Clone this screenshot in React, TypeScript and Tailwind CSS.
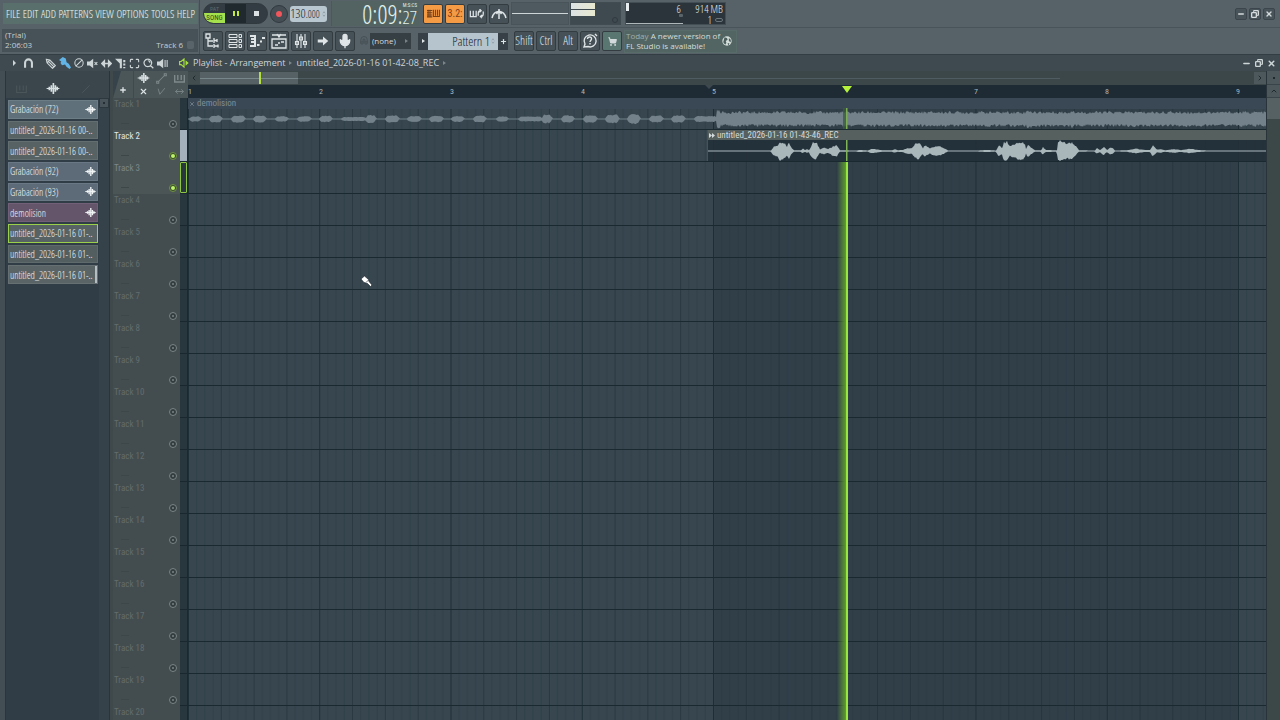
import type { ReactNode } from "react";
import {
  ArrowRight,
  Ban,
  ChevronRight,
  ChevronUp,
  Copy,
  Magnet,
  Maximize,
  Mic,
  Minus,
  Plus,
  ShoppingCart,
  X,
} from "lucide-react";

const NARROW = "font-['Open_Sans_Condensed_Light','Roboto_Condensed','Liberation_Sans',sans-serif]";
const LABEL = "font-['Roboto_Condensed','Roboto','Liberation_Sans',sans-serif]";
const WIDE = "font-['Open_Sans','Noto_Sans',sans-serif]";

const BAR = 131.25;
const TRACKS = Array.from({ length: 20 }, (_, i) => i + 1);

const MENU = ["FILE", "EDIT", "ADD", "PATTERNS", "VIEW", "OPTIONS", "TOOLS", "HELP"];

type Clip = { name: string; tone: string; wave?: boolean };

const PICKER: Clip[] = [
  { name: "Grabación (72)", tone: "bg-[#60707a] border-[#6d7d86]", wave: true },
  { name: "untitled_2026-01-16 00-..", tone: "bg-[#566264] border-[#626e70]" },
  { name: "untitled_2026-01-16 00-..", tone: "bg-[#566264] border-[#626e70]" },
  { name: "Grabación (92)", tone: "bg-[#5d6a78] border-[#6a7785]", wave: true },
  { name: "Grabación (93)", tone: "bg-[#5d6a78] border-[#6a7785]", wave: true },
  { name: "demolision", tone: "bg-[#64556a] border-[#725f78]", wave: true },
  { name: "untitled_2026-01-16 01-..", tone: "bg-[#566264] border-[#9bd04a]" },
  { name: "untitled_2026-01-16 01-..", tone: "bg-[#525e60] border-[#5e6a6c]" },
  { name: "untitled_2026-01-16 01-..", tone: "bg-[#5a6466] border-[#667072]" },
];

function noise(i: number) {
  const v = Math.sin(i * 12.9898) * 43758.5453;
  return v - Math.floor(v);
}

function envelope(points: [number, number][], x: number) {
  for (let i = 1; i < points.length; i++) {
    const [x1, a1] = points[i];
    const [x0, a0] = points[i - 1];
    if (x <= x1) return a0 + ((a1 - a0) * (x - x0)) / Math.max(1, x1 - x0);
  }
  return 0;
}

function shape(from: number, to: number, mid: number, amp: (x: number) => number) {
  const up: string[] = [];
  const down: string[] = [];
  for (let x = from; x <= to; x++) {
    const a = amp(x);
    up.push(`${x},${(mid - a).toFixed(1)}`);
    down.unshift(`${x},${(mid + amp(x + 0.37)).toFixed(1)}`);
  }
  return `M${up.join("L")}L${down.join("L")}Z`;
}

const PULSES: [number, number, number][] = [
  [2, 13, 2], [22, 34, 3], [44, 57, 3], [66, 78, 3], [88, 100, 2.2], [110, 123, 2.2],
  [132, 144, 2.6], [154, 178, 1.4], [178, 188, 3.4], [198, 211, 3], [220, 233, 2.4],
  [242, 255, 2.6], [264, 276, 2.4], [286, 298, 2.8], [309, 320, 2], [331, 354, 1.9],
  [354, 364, 3.8], [374, 386, 3.2], [396, 409, 3], [418, 431, 3.8], [440, 452, 4.2],
  [462, 475, 2.8], [484, 497, 3], [507, 529, 2.4],
];

function songAmp(x: number) {
  const i = Math.floor(x);
  if (i >= 529) {
    const accent = i < 533 || (i > 838 && i < 844) || (i > 882 && i < 887) ? 1.6 : 0;
    return 5 + noise(x) * 3 + accent;
  }
  for (const [a, b, h] of PULSES) {
    if (x >= a && x <= b) {
      const edge = Math.min(1, (Math.min(x - a, b - x) + 1) / 3);
      return 0.6 + h * edge * (0.75 + noise(x) * 0.3);
    }
  }
  return 0.6;
}

const VOICE: [number, number][] = [
  [0, 0.6], [63, 0.6], [66, 5], [70, 6], [72, 10], [77, 8], [79, 5], [81, 9], [84, 3], [86, 0.7],
  [93, 0.7], [95, 2.5], [97, 0.8], [99, 2], [101, 0.8], [105, 9], [109, 8], [112, 2], [116, 3.5],
  [120, 2], [125, 5], [129, 6], [132, 0.7], [149, 0.6], [151, 1], [160, 0.6], [164, 2.5],
  [169, 1.5], [175, 0.7], [184, 0.7], [187, 1.8], [190, 0.8], [195, 1], [199, 3], [204, 3],
  [207, 7], [211, 9], [215, 3], [217, 6], [222, 3], [226, 4.5], [232, 5], [236, 3], [240, 0.6],
  [270, 0.6], [279, 1], [288, 0.6], [291, 6], [294, 3], [296, 9], [299, 10], [302, 5], [306, 7],
  [312, 9], [317, 8], [318, 2], [320, 6], [327, 0.8], [333, 0.7], [335, 4], [338, 1], [349, 0.7],
  [350, 9], [352, 11], [358, 8], [364, 9], [368, 5], [371, 0.7], [387, 0.6], [389, 3], [392, 1],
  [396, 4.5], [399, 1], [402, 3.5], [405, 3], [407, 0.6], [419, 0.7], [428, 2.5], [437, 1],
  [442, 1], [445, 5.5], [449, 1.5], [453, 1.8], [457, 0.7], [467, 2], [473, 0.8], [482, 2.4],
  [490, 1], [498, 0.6], [560, 0.6],
];

const SONG_PATH = shape(0, 1600, 21, songAmp);
const VOICE_PATH = shape(0, 1100, 11, (x) => {
  const a = x > 556 ? 0.6 : envelope(VOICE, x);
  return a > 1.5 ? a * (0.8 + noise(x) * 0.25) : a;
});

function WaveIcon({ className = "" }: { className?: string }) {
  return (
    <svg viewBox="0 0 14 12" className={className} fill="none" stroke="currentColor" strokeWidth="1.8" aria-hidden>
      <path d="M0 6h14" strokeWidth="1.2" />
      <path d="M3 4.200v3.600M5.200 2.500v7M7.400 0v12M9.600 2.500v7M11.600 4.200v3.600" />
    </svg>
  );
}

function Stroke({ d, className = "size-4", width = 1.5 }: { d: string; className?: string; width?: number }) {
  return (
    <svg viewBox="0 0 16 16" className={className} fill="none" stroke="currentColor" strokeWidth={width} aria-hidden>
      <path d={d} />
    </svg>
  );
}

function Tool({ label, children, tone = "" }: { label: string; children: ReactNode; tone?: string }) {
  return (
    <button
      aria-label={label}
      className={`flex size-5 shrink-0 items-center justify-center rounded-[2px] border border-[#323c41] ${tone || "bg-[#465157] text-[#dfe5e7]"}`}
    >
      {children}
    </button>
  );
}

function Transport() {
  return (
    <div className="flex h-[27px] items-center">
      <div className="ml-[3px] flex h-[21px] w-[65px] items-stretch overflow-hidden rounded-full border border-[#30393e] bg-[#333c42]">
        <button className={`flex w-[21px] flex-col text-center text-[6px] leading-[9px] ${LABEL}`}>
          <span className="text-[#5d676b]">PAT</span>
          <span className="bg-[#a5e14c] text-[7px] leading-[10px] text-[#33451d]">SONG</span>
        </button>
        <button aria-label="Pause" className="flex w-[21px] items-center justify-center gap-[2px] bg-[#20292e]">
          <span className="h-[5px] w-[2px] bg-[#c4ea3c]" />
          <span className="h-[5px] w-[2px] bg-[#c4ea3c]" />
        </button>
        <button aria-label="Stop" className="flex w-5 items-center justify-center">
          <span className="size-[5px] bg-[#dbe0e2]" />
        </button>
      </div>
      <button aria-label="Record" className="ml-[2px] flex size-[18px] items-center justify-center rounded-full border border-[#30393e] bg-[#434d53]">
        <span className="size-[6px] rounded-full bg-[#f0565c]" />
      </button>
      <button aria-label="Tempo" className={`ml-[2px] flex h-4 w-[37px] items-center justify-center rounded-[3px] bg-[#b9c7d0] text-[#15232b] ${NARROW}`}>
        <span className="flex items-baseline">
          <span className="text-[13px] leading-4">130</span>
          <span className="text-[10px] leading-4">.000</span>
        </span>
        <Stroke d="M5 6l3-4 3 4M5 10l3 4 3-4" className="ml-px size-[6px] text-[#73828c]" />
      </button>
      <div className={`ml-1 flex h-[25px] w-[88px] items-center justify-end border-l border-[#4a5a5a] bg-[#526361] pr-[2px] text-[#e0f0ea] ${NARROW}`}>
        <span className="text-[25px] leading-6">0:09:</span>
        <span className="flex flex-col">
          <span className={`text-right text-[5px] leading-[6px] ${LABEL}`}>M:S:CS</span>
          <span className="text-[18px] leading-[18px]">27</span>
        </span>
      </div>
      <div className="ml-1 flex gap-[2px]">
        <Tool label="Typing keyboard" tone="bg-[#f59a45] text-[#74401a]">
          <svg viewBox="0 0 18 12" className="h-[9px] w-4" fill="none" stroke="currentColor" strokeWidth="1.4" aria-hidden>
            <path d="M1 2h7M1 5h7M1 8h7M2.500 1v9M5 1v9M9.500 1v9h8V1M12.200 1v8M14.900 1v8M1 10.500h7" />
          </svg>
        </Tool>
        <Tool label="Countdown" tone="bg-[#f59a45] text-[#74401a]">
          <span className={`text-[10px] leading-3 ${LABEL}`}>3.2:</span>
        </Tool>
        <Tool label="Loop record">
          <svg viewBox="0 0 18 12" className="h-[10px] w-4" fill="none" stroke="currentColor" strokeWidth="1.5" aria-hidden>
            <path d="M1 2v7h7V2M4.500 2v7M10.500 8V5c0-2 1-3 3-3M12 0l2 2-2 2M16.500 3v3c0 2-1 3-3 3M15 11l-2-2 2-2" />
          </svg>
        </Tool>
        <Tool label="Metronome">
          <Stroke d="M1 12C2 8 4 5.500 8 5.500S14 8 15 12M8 3v10M5.500 8 8 4.500 10.500 8" />
        </Tool>
      </div>
      <div className="ml-[2px] flex h-[23px] w-[58px] items-center border border-[#48535a] bg-[#4f5a60]">
        <div className="h-px w-full bg-[#cfd6d8]" />
      </div>
      <div className="ml-px h-[23px] w-[51px] border border-[#414c52] bg-[#3f4a50]">
        <div className="h-[6px] w-[24px] bg-gradient-to-r from-[#dde2e4] to-[#e9e9cf]" />
        <div className="mt-px h-[6px] w-[24px] bg-gradient-to-r from-[#dde2e4] to-[#e9e9cf]" />
        <div className="ml-auto mr-[2px] mt-px size-[6px] rounded-full border border-[#2f393f]" />
      </div>
      <div className={`ml-1 flex h-[23px] w-[101px] border border-[#434e54] bg-[#2a343a] text-[11px] leading-[11px] text-[#e4eaec] ${NARROW}`}>
        <div className="flex w-[57px] flex-col justify-between border-b border-[#aeb6b9]">
          <div className="flex justify-between pr-[2px]">
            <span className="h-2 w-[3px] bg-[#e8edef]" />
            <span>6</span>
          </div>
          <span className="mb-[6px] ml-auto size-1 rounded-[1px] bg-[#59656b]" />
        </div>
        <div className="flex flex-1 flex-col pr-[2px] text-right">
          <span>914 MB</span>
          <span className="flex items-center justify-end gap-[3px]">
            1<span className="h-1 w-2 rounded-full border border-[#6a767b]" />
          </span>
        </div>
      </div>
    </div>
  );
}

function Shortcuts() {
  return (
    <div className="flex h-[27px] items-center border-t border-[#48535a]">
      <div className="ml-[3px] flex gap-[2px]">
        <Tool label="Browser"><Stroke d="M1 1h4v4H1zM3 5v8h5M3 8h5M9 5v5M9 7.500h3M12 6v3M9 11v4M9 13h4M13 11.500v3" width={1.3} /></Tool>
        <Tool label="Channel rack"><Stroke d="M2 1.500h8v3H2zM2 6.500h8v3H2zM2 11.500h8v3H2zM12 1.500h2.500v3H12zM12 6.500h2.500v3H12zM12 11.500h2.500v3H12z" width={1} /></Tool>
        <Tool label="Piano roll"><Stroke d="M1 3h5v3H2M6 6v3H2M6 9v4H1M8 12h2.500M11 8.500h2M13 5h3" width={2} /></Tool>
        <Tool label="Playlist"><Stroke d="M1 6h14v9H1zM1 2h14M6 1l2 3 2-3M4 12h3M7 10h2M10 9h3" width={1.3} /></Tool>
        <Tool label="Mixer"><Stroke d="M4 1v14M8 1v14M12 1v14M2.500 8.500h3v3h-3zM10.500 8.500h3v3h-3zM6.500 4h3v3h-3z" width={1.1} /></Tool>
        <Tool label="Next">
          <svg viewBox="0 0 16 16" className="size-3" fill="currentColor" aria-hidden><path d="M1 6h7V2l7 6-7 6v-4H1z" /></svg>
        </Tool>
        <Tool label="Microphone"><Mic className="size-4" fill="currentColor" strokeWidth={2} /></Tool>
      </div>
      <Magnet className="ml-1 size-[10px] -rotate-45 text-[#454f54]" />
      <div className="ml-px flex h-4 w-[41px] items-center bg-[#353f44] pl-[2px] text-[#d3dadc]">
        <select aria-label="Snap" className={`min-w-0 flex-1 appearance-none bg-transparent text-[8px] leading-4 outline-none ${WIDE}`}>
          <option>(none)</option>
        </select>
        <span className="mr-[3px] border-y-[2px] border-l-[3px] border-y-transparent border-l-[#77828a]" />
      </div>
      <button aria-label="Pattern menu" className="ml-[7px] flex h-[17px] w-[10px] items-center justify-center bg-[#364046]">
        <span className="border-y-[2px] border-l-[3px] border-y-transparent border-l-[#dfe5e7]" />
      </button>
      <div className="flex h-[17px] w-[70px] items-center bg-[#b6c4ce] pr-[2px] text-[#15232b]">
        <select aria-label="Pattern" className={`min-w-0 flex-1 appearance-none bg-transparent text-right text-[13px] leading-4 outline-none [text-align-last:right] ${NARROW}`}>
          <option>Pattern 1</option>
        </select>
        <Stroke d="M5 6l3-4 3 4M5 10l3 4 3-4" className="size-[6px] text-[#7c8a94]" />
      </div>
      <button aria-label="Add pattern" className="flex h-[17px] w-[10px] items-center justify-center bg-[#364046] text-[#dfe5e7]">
        <Plus className="size-[7px]" strokeWidth={4} />
      </button>
      <div className={`ml-[6px] flex gap-[2px] text-[12px] ${NARROW}`}>
        <Tool label="Shift">Shift</Tool>
        <Tool label="Ctrl">Ctrl</Tool>
        <Tool label="Alt">Alt</Tool>
        <Tool label="Help">
          <Stroke d="M2 14l1-3A6 6 0 1 1 6 13.500zM5.500 6c0-3 4.500-2.500 4 0C9.500 7 8 7.500 8 9M8 10v1.500M13 1l2 2" width={1.4} />
        </Tool>
        <Tool label="Shop" tone="bg-[#5a7670] text-[#d3dadc]"><ShoppingCart className="size-[9px]" fill="currentColor" strokeWidth={3} /></Tool>
      </div>
      <div className={`ml-[2px] flex h-[23px] w-[113px] items-center justify-between border border-[#576b69] bg-[#536563] pl-px pr-1 text-[8px] leading-[10px] text-[#d3ddda] ${WIDE}`}>
        <p className="whitespace-nowrap">
          <span className="text-[#9fb0ac]">Today</span> A newer version of
          <br />
          FL Studio is available!
        </p>
        <svg viewBox="0 0 16 16" className="size-[10px] shrink-0" aria-hidden>
          <circle cx="8" cy="8" r="7.500" fill="currentColor" />
          <path d="M4 2l4 1 1 3-3 2 1 3-2 3-3-4zM11 3l3 3v4l-3-2zM9 11l3 1-2 3z" fill="#4c5f5d" />
        </svg>
      </div>
    </div>
  );
}

function TopBar() {
  return (
    <header className="flex h-[54px] shrink-0 items-start bg-[#566268]">
      <div className="flex h-[54px] w-[200px] shrink-0 flex-col border-r border-[#444f55]">
        <nav className={`ml-[3px] mt-[3px] flex h-[21px] w-[195px] items-center justify-between bg-[#596f6b] px-[3px] text-[11px] leading-3 text-[#f0f7f4] ${NARROW}`}>
          {MENU.map((m) => (
            <button key={m}>{m}</button>
          ))}
        </nav>
        <div className={`ml-[2px] mt-[5px] h-[23px] w-[196px] border border-[#465157] bg-[#475258] px-[2px] text-[8px] leading-[10px] text-[#c6ced0] ${WIDE}`}>
          <div>(Trial)</div>
          <div className="flex items-center justify-between">
            <span>2:06:03</span>
            <span className="flex items-center gap-[4px]">
              Track 6<span className="mr-px h-2 w-[7px] rounded-[2px] bg-[#59646a]" />
            </span>
          </div>
        </div>
      </div>
      <div className="flex flex-1 flex-col">
        <div className="flex items-center justify-between">
          <Transport />
          <div className="mr-[5px] flex gap-[2px] text-[#d4dadc]">
            {[Minus, Copy, X].map((Icon, i) => (
              <button key={i} aria-label={["Minimize", "Restore", "Close"][i]} className="flex size-3 items-center justify-center rounded-[2px] border border-[#3b454b] bg-[#48535a]">
                <Icon className={i === 1 ? "size-2 rotate-90" : "size-2"} strokeWidth={4} />
              </button>
            ))}
          </div>
        </div>
        <Shortcuts />
      </div>
    </header>
  );
}

function TitleBar() {
  return (
    <div className={`flex h-[17px] shrink-0 items-center border-t border-[#333d44] bg-[#3f4a50] text-[#cdd5d7] ${WIDE}`}>
      <div className="flex w-[175px] items-center pl-[13px]">
        <button aria-label="Menu" className="mr-[7px] border-y-[3px] border-l-[3px] border-y-transparent border-l-[#cdd5d7]" />
        <button aria-label="Snap to grid"><Stroke d="M3 14V7a5 5 0 0 1 10 0v7M1.500 12h3M11.500 12h3" className="size-[11px]" width={3} /></button>
        <div className="ml-[11px] flex w-[123px] items-center justify-between">
          <button aria-label="Draw"><Stroke d="M2 2l5 1 8 8-4 4-8-8zM5 5l8 8M7 3L3 7" className="size-[11px]" width={1.7} /></button>
          <button aria-label="Paint" className="text-[#62b4e6]">
            <svg viewBox="0 0 16 16" className="size-[12px]" fill="currentColor" aria-hidden><path d="M0 4l5-4 4 2 1 5 3 2 3 5-2 2-4-3-2-3-4 1-2-3 1-2z" /></svg>
          </button>
          <button aria-label="Delete"><Ban className="size-[10px] rotate-90" strokeWidth={2.5} /></button>
          <button aria-label="Mute"><svg viewBox="0 0 16 16" className="size-[11px]" fill="currentColor" aria-hidden><path d="M0 5h4l5-4v14l-5-4H0z" /><path d="M11 6l4 4M15 6l-4 4" stroke="currentColor" strokeWidth="1.6" /></svg></button>
          <button aria-label="Slip"><Stroke d="M1 8h14M5 4L1 8l4 4zM11 4l4 4-4 4z" className="size-[11px]" width={2} /></button>
          <button aria-label="Slice"><svg viewBox="0 0 16 16" className="size-[11px]" fill="currentColor" aria-hidden><path d="M0 1h10v14H7V8z" /><path d="M12 3h3v3h-3zM12 8h3v3h-3zM12 13h3v2h-3z" /></svg></button>
          <button aria-label="Select"><Maximize className="size-[11px]" strokeWidth={2.5} /></button>
          <button aria-label="Zoom"><Stroke d="M7 1.500a5.500 5.500 0 1 0 .1 0M11 11l4 4M7 4a3 3 0 0 1 3 3" className="size-[11px]" width={1.8} /></button>
          <button aria-label="Playback"><svg viewBox="0 0 16 16" className="size-[11px]" fill="currentColor" aria-hidden><path d="M0 5h4l5-4v14l-5-4H0zM11 3h1.500v10H11zM14 3h1.500v10H14z" /></svg></button>
        </div>
      </div>
      <button aria-label="Play source" className="ml-[4px] text-[#a8e23c]">
        <svg viewBox="0 0 16 16" className="size-[10px]" fill="none" stroke="currentColor" strokeWidth="1.8" aria-hidden>
          <path d="M1 5.500h2.500L8 1.500v13L3.500 10.500H1z" />
          <path d="M10.500 3.500 15.500 8l-5 4.500z" fill="currentColor" stroke="none" />
        </svg>
      </button>
      <div className="ml-[4px] flex items-center whitespace-nowrap text-[9px] leading-4">
        <span>Playlist - Arrangement</span>
        <span className="mx-[4px] border-y-[2px] border-l-[3px] border-y-transparent border-l-[#7b868b]" />
        <span>untitled_2026-01-16 01-42-08_REC</span>
        <span className="mx-[4px] border-y-[2px] border-l-[3px] border-y-transparent border-l-[#7b868b]" />
      </div>
      <div className="ml-auto mr-[4px] flex gap-[4px]">
        <button aria-label="Minimize window"><Minus className="size-[9px]" strokeWidth={4} /></button>
        <button aria-label="Restore window"><Copy className="size-2 rotate-90" strokeWidth={4} /></button>
        <button aria-label="Close window"><X className="size-[9px]" strokeWidth={4} /></button>
      </div>
    </div>
  );
}

function Picker() {
  return (
    <aside className="flex w-[104px] shrink-0 flex-col border-l border-[#2a353c] bg-[#313d46]">
      <div className="flex h-[27px] shrink-0 items-center bg-[#3b464c] pl-[10px] pt-2">
        <button aria-label="Patterns" className="text-[#4b565b]"><Stroke d="M1 3v10h14V3M5.500 3v7M10.500 3v7" className="h-3 w-[11px]" /></button>
        <button aria-label="Audio clips" className="ml-[19px] text-[#d8dfe1]"><WaveIcon className="h-[11px] w-[14px]" /></button>
        <button aria-label="Automation" className="ml-[21px] text-[#4b565b]"><Stroke d="M2 14L14 2" className="size-[10px]" /></button>
      </div>
      <div className="flex flex-1">
        <div className={`ml-[2px] mt-[2px] grid h-[184px] w-[90px] auto-rows-fr gap-[2px] text-[10px] text-[#f1f5f6] ${NARROW}`}>
          {PICKER.map((c, i) => (
            <button key={i} className={`flex items-center justify-between overflow-hidden whitespace-nowrap border pl-px text-left ${c.tone}`}>
              <span className="leading-3">{c.name}</span>
              {c.wave && <WaveIcon className="mr-px h-[9px] w-[11px] shrink-0" />}
              {i === 8 && <span className="h-full w-[2px] shrink-0 bg-[#b4bdc1]" />}
            </button>
          ))}
        </div>
        <div className="ml-px flex w-[10px] flex-col bg-[#36424a]">
          <button aria-label="Scroll up" className="flex h-[10px] items-center justify-center border border-[#2c373e] bg-[#49545a]">
            <span className="size-[2px] bg-[#242e34]" />
          </button>
        </div>
      </div>
    </aside>
  );
}

function TrackHeader({ n }: { n: number }) {
  const lit = n === 2 || n === 3;
  const text = n === 2 ? "text-[#e1e7e8]" : n === 3 ? "text-[#7d8789]" : "text-[#636c6d]";
  return (
    <div className="flex h-8 shrink-0">
      <div className={`flex w-[68px] flex-col justify-between pl-px pt-px ${lit ? "bg-[#4c5556]" : "bg-[#434c4e]"}`}>
        <span className={`text-[9px] leading-[11px] ${LABEL} ${text}`}>Track {n}</span>
        <div className="mb-[2px] flex h-[9px] items-center justify-between pl-[7px] pr-[3px]">
          <span className="h-px w-2 bg-[#3d4648]" />
          <button aria-label={`Mute track ${n}`} className={`flex size-[8px] items-center justify-center rounded-full border ${lit ? "border-[#6f9440] bg-[#37472c]" : "border-[#7b8587] bg-[#333c3e]"}`}>
            <span className={lit ? "size-1 rounded-full bg-[#bdf26a]" : "size-[2px] rounded-full bg-[#7b8587]"} />
          </button>
        </div>
      </div>
      <div className="flex w-[7px] border-b border-[#1a272e] bg-[#28363d]">
        {n === 2 && <span className="flex-1 bg-[#a2b1bb]" />}
        {n === 3 && <span className="flex-1 rounded-[1px] border border-[#8cc63f]" />}
      </div>
    </div>
  );
}

function Corner() {
  return (
    <div className="flex h-[27px] w-[75px] shrink-0 bg-[#4b5659] text-[#dde3e4] [clip-path:polygon(8px_0,100%_0,100%_100%,0_100%)]">
      <div className="flex w-[21px] items-end justify-center border-r border-[#40494c] pb-[4px]">
        <button aria-label="Add track"><Plus className="size-2" strokeWidth={4} /></button>
      </div>
      <div className="grid flex-1 grid-cols-3 place-items-center">
        <button aria-label="Audio"><WaveIcon className="h-[10px] w-[13px]" /></button>
        <button aria-label="Automation clips" className="text-[#7e898b]"><Stroke d="M1 12h3v3H1zM12 1h3v3h-3zM4 12l8-8" className="size-[11px]" /></button>
        <button aria-label="Pattern clips" className="text-[#7e898b]"><Stroke d="M1 3v10h14V3M5.500 3v7M10.500 3v7" className="size-[11px]" width={2} /></button>
        <button aria-label="Clear"><X className="size-[9px]" strokeWidth={3} /></button>
        <button aria-label="Slide" className="text-[#7e898b]"><Stroke d="M2 3l3 10L14 2" className="size-[9px]" /></button>
        <button aria-label="Stretch" className="text-[#7e898b]"><Stroke d="M1 8h14M5 4L1 8l4 4M11 4l4 4-4 4" className="size-[9px]" /></button>
      </div>
    </div>
  );
}

function Minimap() {
  return (
    <div className="flex h-[14px] items-center bg-[#3c4749] py-px">
      <button aria-label="Scroll left" className="flex h-3 w-3 items-center justify-center bg-[#424d50] text-[#202a2f]">
        <ChevronRight className="size-2 rotate-180" strokeWidth={3} />
      </button>
      <div className="relative flex h-3 flex-1 items-center">
        <div className="flex h-3 w-[98px] items-center bg-[#556165]">
          <div className="h-px w-full bg-[#77868b]" />
        </div>
        <div className="h-px w-[762px] bg-[#4f5c62]" />
        <div className="absolute left-[59px] h-3 w-[2px] bg-[#b3e03e]" />
      </div>
      <button aria-label="Scroll right" className="flex h-3 w-3 items-center justify-center bg-[#4c585c] text-[#202a2f]">
        <ChevronRight className="size-2" strokeWidth={3} />
      </button>
    </div>
  );
}

function Ruler() {
  return (
    <div className={`relative flex h-[13px] overflow-hidden bg-[#1e2b34] text-[8px] leading-[13px] text-[#aab6bc] ${LABEL}`}>
      {[1, 2, 3, 4, 5, 6, 7, 8, 9].map((n) => (
        <span key={n} className="w-[131px] shrink-0">{n === 6 ? "" : n}</span>
      ))}
      <div className="absolute left-[517px] top-0 border-x-[4px] border-t-[4px] border-x-transparent border-t-[#3c484e]" />
      <div className="absolute left-[654px] top-px border-x-[5px] border-t-[7px] border-x-transparent border-t-[#b6f23c]" />
    </div>
  );
}

function Canvas() {
  return (
    <div className="relative min-w-0 flex-1 overflow-hidden bg-[#37464f]">
      <svg className="absolute inset-0 h-full w-full" aria-hidden>
        <defs>
          <pattern id="bars" width={BAR} height="32" patternUnits="userSpaceOnUse">
            {Array.from({ length: 16 }, (_, i) => (
              <rect key={i} x={(i * BAR) / 16} width="1" height="32" fill="#1b2a33" opacity={i === 0 ? 0.85 : i % 4 === 0 ? 0.5 : 0.24} />
            ))}
            <rect y="31" width={BAR} height="1.500" fill="#1a2830" />
          </pattern>
        </defs>
        <rect x={BAR * 4} width={BAR * 4} height="100%" fill="#313f49" />
        <rect width="100%" height="100%" fill="url(#bars)" />
      </svg>

      <div className="absolute bottom-0 left-[649px] top-16 flex">
        <div className="w-[9px] bg-gradient-to-r from-[#4f8a2c]/0 to-[#5f9f2f]" />
        <div className="w-[2px] bg-[#98e63f]" />
      </div>

      <section className="absolute inset-x-0 top-0 h-[31px]">
        <svg className="absolute inset-0 h-full w-full" aria-hidden>
          <path d={SONG_PATH} fill="#73818a" />
          <rect x="655" y="10" width="4" height="21" fill="#3c5c3c" opacity=".8" />
          <rect x="658" y="10" width="1.500" height="21" fill="#7dad58" />
        </svg>
        <h3 className={`flex h-[11px] items-center gap-[2px] bg-[#394854] pl-px text-[9px] leading-[11px] text-[#7f8c95] ${LABEL}`}>
          <X className="size-[6px]" strokeWidth={3} />
          demolision
        </h3>
      </section>

      <section className="absolute left-[519px] right-0 top-8 h-[31px] border-l border-[#46535a] bg-[#22303a]/90">
        <h3 className={`flex h-[10px] items-center gap-[2px] bg-[#56605f] pl-px text-[9px] leading-[10px] text-[#d3dadb] ${LABEL}`}>
          <svg viewBox="0 0 12 10" className="h-[5px] w-[6px]" fill="currentColor" aria-hidden><path d="M0 0l6 5-6 5zM6 0l6 5-6 5z" /></svg>
          untitled_2026-01-16 01-43-46_REC
        </h3>
        <svg className="block h-[21px] w-full" aria-hidden>
          <path d={VOICE_PATH} fill="#a9b6ba" />
          <rect x="138" width="1.500" height="21" fill="#7fb457" />
        </svg>
      </section>

      <svg viewBox="0 0 12 12" className="absolute left-[172px] top-[177px] size-3" aria-hidden>
        <path d="M1 4L4.500 1l4 3.500 .5 2L12 10l-1.500 1.500L7.500 8.500 4 7.500z" fill="#fff" stroke="#18222a" strokeWidth=".6" />
        <path d="M6 7.500L8.500 5" stroke="#18222a" strokeWidth=".6" />
      </svg>
    </div>
  );
}

export default function App() {
  return (
    <div className="flex h-screen flex-col overflow-hidden bg-[#3f4a50]">
      <TopBar />
      <TitleBar />
      <main className="flex min-h-0 flex-1 bg-[#37434a]">
        <div className="w-[5px] shrink-0 bg-[#434e54]" />
        <Picker />
        <div className="w-1 shrink-0 border-l border-[#2a353b] bg-[#3f494c]" />
        <div className="flex min-w-0 flex-1 flex-col">
          <div className="flex shrink-0">
            <Corner />
            <div className="min-w-0 flex-1">
              <Minimap />
              <Ruler />
            </div>
          </div>
          <div className="flex min-h-0 flex-1">
            <div className="flex w-[75px] shrink-0 flex-col overflow-hidden border-r border-[#1b2830]">
              {TRACKS.map((n) => (
                <TrackHeader key={n} n={n} />
              ))}
            </div>
            <Canvas />
          </div>
        </div>
        <div className="flex w-[14px] shrink-0 flex-col border-l border-[#28333a] bg-[#3c4747] text-[#1f292e]">
          <button aria-label="Zoom" className="flex h-[14px] items-center justify-center border-b border-[#39444a] bg-[#4c585c]">
            <span className="size-[2px] bg-[#1f292e]" />
          </button>
          <button aria-label="Scroll up" className="flex h-[13px] items-center justify-center border-b border-[#39444a] bg-[#4c585c]">
            <ChevronUp className="size-2" strokeWidth={3} />
          </button>
          <div className="h-[21px] bg-[#566164]" />
        </div>
      </main>
    </div>
  );
}
